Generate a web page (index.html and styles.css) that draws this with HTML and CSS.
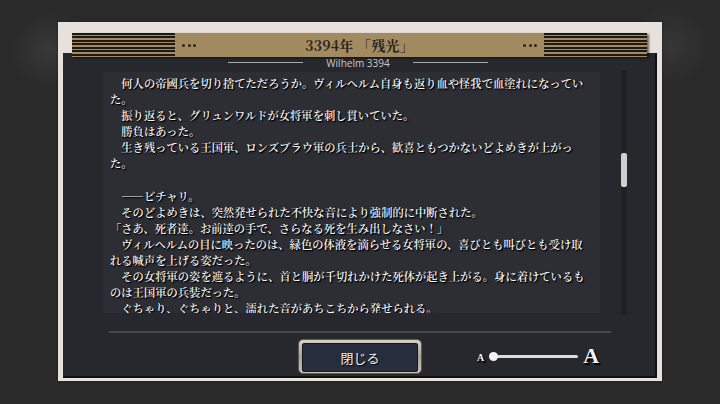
FILE: index.html
```html
<!DOCTYPE html>
<html lang="ja">
<head>
    <meta charset="UTF-8">
    <title>3394年 「残光」</title>
    <link rel="stylesheet" href="styles.css">
</head>
<body>
    <div class="screen">
        <div class="frame">
            <div class="header">
                <div class="stripes"></div>
                <div class="dots"><span></span><span></span><span></span></div>
                <h1 class="title">3394年 「残光」</h1>
                <div class="dots"><span></span><span></span><span></span></div>
                <div class="stripes"></div>
            </div>
            <div class="panel">
                <div class="sub">
                    <span class="sub-line"></span>
                    <span class="sub-text">Wilhelm 3394</span>
                    <span class="sub-line"></span>
                </div>
                <div class="body">
                    <div class="story">
                        <p>　何人の帝國兵を切り捨てただろうか。ヴィルヘルム自身も返り血や怪我で血塗れになっていた。</p>
                        <p>　振り返ると、グリュンワルドが女将軍を刺し貫いていた。</p>
                        <p>　勝負はあった。</p>
                        <p>　生き残っている王国軍、ロンズブラウ軍の兵士から、歓喜ともつかないどよめきが上がった。</p>
                        <p class="blank"></p>
                        <p>　――ビチャリ。</p>
                        <p>　そのどよめきは、突然発せられた不快な音により強制的に中断された。</p>
                        <p>「さあ、死者達。お前達の手で、さらなる死を生み出しなさい！」</p>
                        <p>　ヴィルヘルムの目に映ったのは、緑色の体液を滴らせる女将軍の、喜びとも叫びとも受け取れる喊声を上げる姿だった。</p>
                        <p>　その女将軍の姿を遮るように、首と胴が千切れかけた死体が起き上がる。身に着けているものは王国軍の兵装だった。</p>
                        <p>　ぐちゃり、ぐちゃりと、濡れた音があちこちから発せられる。</p>
                    </div>
                    <div class="scrollbar"><div class="thumb"></div></div>
                </div>
                <div class="divider"></div>
                <div class="footer">
                    <button class="close-btn" type="button"><span>閉じる</span></button>
                    <div class="font-size">
                        <span class="a-small">A</span>
                        <div class="track"><span class="knob"></span></div>
                        <span class="a-large">A</span>
                    </div>
                </div>
            </div>
        </div>
    </div>
</body>
</html>
```

FILE: styles.css
```css
body {
    margin: 0;
    background: #262626;
}
.screen {
    width: 720px;
    height: 404px;
    box-sizing: border-box;
    padding: 22px 0 0 58px;
    background:
        radial-gradient(circle at 50px 50px, rgba(255,255,255,0.07), rgba(255,255,255,0) 40px),
        radial-gradient(circle at 670px 45px, rgba(255,255,255,0.06), rgba(255,255,255,0) 40px),
        #2a2a2a;
    overflow: hidden;
}
.frame {
    width: 604px;
    height: 359px;
    box-sizing: border-box;
    background: #e6e1db;
    padding: 11px 5px 4px 5px;
    box-shadow: 0 0 3px rgba(0,0,0,0.3);
}

/* header bar */
.header {
    position: relative;
    z-index: 1;
    display: flex;
    align-items: center;
    height: 24px;
    margin: 0 10px -4px 9px;
    background: #a28b61;
    box-shadow: 2px 1px 2px rgba(0,0,0,0.55);
}
.stripes {
    width: 103px;
    height: 24px;
    background: repeating-linear-gradient(to bottom, #1d1a15 0, #1d1a15 2px, #a28b61 2px, #a28b61 3.43px);
}
.dots {
    display: flex;
    gap: 2.5px;
    margin: 0 7px;
}
.dots span {
    width: 3px;
    height: 3px;
    border-radius: 50%;
    background: #2a241c;
}
.title {
    flex: 1;
    margin: 0;
    text-align: center;
    font-family: "Noto Serif CJK JP", "Liberation Serif", "Noto Sans CJK JP", serif;
    font-size: 14px;
    font-weight: bold;
    color: #2a231a;
    letter-spacing: 0.2px;
}

/* dark panel */
.panel {
    height: 325px;
    box-sizing: border-box;
    background: #26282d;
    border-right: 2px solid #101114;
    border-bottom: 2px solid #101114;
}
.sub {
    height: 19px;
    display: flex;
    align-items: center;
    justify-content: center;
    gap: 23px;
    padding-right: 2px;
}
.sub-line {
    width: 75px;
    height: 1px;
    background: #a9a9a9;
}
.sub-text {
    font-family: "Open Sans", "Liberation Sans", sans-serif;
    font-size: 10px;
    color: #c9c9c9;
}
.body {
    display: flex;
    align-items: flex-start;
}
.story {
    width: 497px;
    height: 241px;
    margin-left: 40px;
    box-sizing: border-box;
    padding: 3px 0 0 7px;
    background: #2c2e33;
    overflow: hidden;
    font-family: "Noto Serif CJK JP", "Noto Sans CJK JP", serif;
    font-size: 11.3px;
    font-weight: 600;
    line-height: 16.1px;
    color: #f6f6f6;
    text-shadow: 1px 1px 0 #000, 1px 1px 2px #000;
}
.story p {
    margin: 0;
    padding-right: 11px;
}
.story .blank {
    height: 16.1px;
}
.scrollbar {
    width: 6px;
    height: 245px;
    margin: -2px 0 0 21px;
    background: #1f2024;
    position: relative;
}
.thumb {
    position: absolute;
    left: 0;
    top: 83px;
    width: 6px;
    height: 34px;
    border-radius: 2px;
    background: #cfcfcf;
}
.divider {
    width: 502px;
    height: 2px;
    margin: 16px 0 0 46px;
    background: #45474d;
}

/* footer */
.footer {
    display: flex;
    align-items: center;
    margin-top: 6px;
}
.close-btn {
    width: 124px;
    height: 35px;
    margin-left: 235px;
    padding: 3px;
    border: 1px solid #5e5a50;
    border-radius: 5px;
    background: linear-gradient(to bottom, #d6d0c2, #a9a394 50%, #c8c2b3);
    cursor: pointer;
}
.close-btn span {
    display: flex;
    align-items: center;
    justify-content: center;
    height: 100%;
    border: 1px solid #15181f;
    border-radius: 2px;
    background: #262d3c;
    color: #f0f0f0;
    font-family: "Noto Sans CJK JP", sans-serif;
    font-size: 13px;
    text-shadow: 1px 1px 1px #000;
}
.font-size {
    display: flex;
    align-items: center;
    margin-left: 55px;
}
.a-small,
.a-large {
    font-family: "Liberation Serif", serif;
    font-weight: bold;
    color: #f4f4f4;
    text-shadow: 1px 1px 0 #000, 2px 2px 1px #000;
}
.a-small {
    font-size: 10px;
    margin-top: 1px;
}
.track {
    position: relative;
    width: 84px;
    height: 3px;
    margin-left: 10px;
    border-radius: 2px;
    background: #dcdcdc;
}
.knob {
    position: absolute;
    left: -5px;
    top: -3px;
    width: 9px;
    height: 9px;
    border-radius: 50%;
    background: #f4f4f4;
}
.a-large {
    font-size: 22px;
    margin-left: 5px;
    margin-top: -2px;
}
```
